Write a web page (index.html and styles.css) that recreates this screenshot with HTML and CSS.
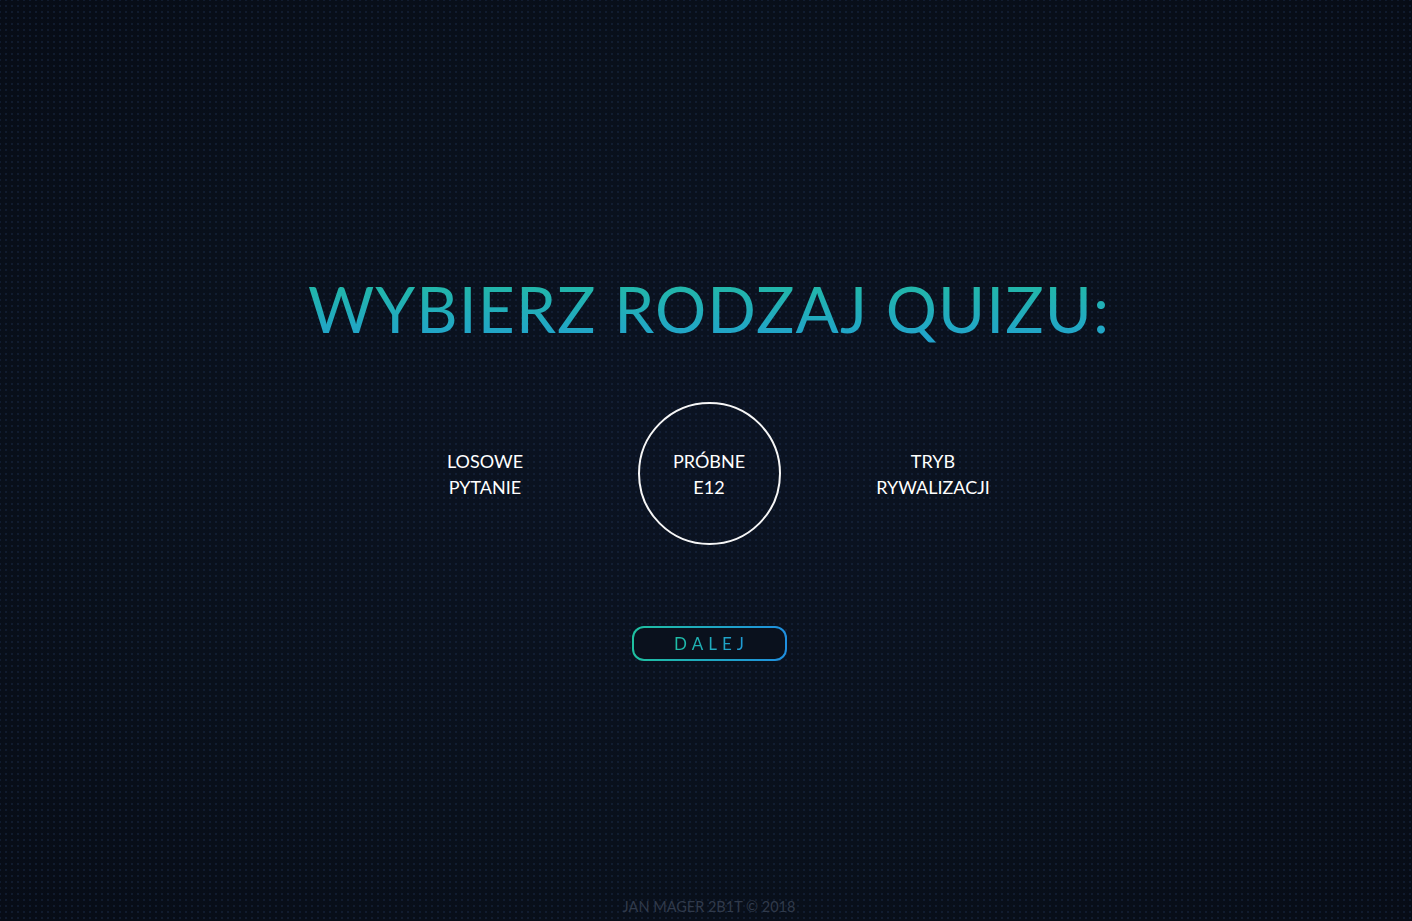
FILE: index.html
```html
<!DOCTYPE html>
<html lang="pl">
<head>
<meta charset="utf-8">
<title>Quiz</title>
<link rel="stylesheet" href="styles.css">
</head>
<body>
<div class="page">
  <main class="main">
    <h1 class="title">WYBIERZ RODZAJ QUIZU:</h1>
    <div class="options">
      <div class="option">LOSOWE<br>PYTANIE</div>
      <div class="option selected">PRÓBNE<br>E12</div>
      <div class="option">TRYB<br>RYWALIZACJI</div>
    </div>
    <button class="next"><span>DALEJ</span></button>
  </main>
  <footer class="footer">JAN MAGER 2B1T © 2018</footer>
</div>
</body>
</html>
```
FILE: styles.css
```css
* { box-sizing: border-box; }
html, body { margin: 0; height: 100%; }
body {
  font-family: Lato, "Open Sans", sans-serif;
  background-color: #0a101c;
  background-image:
    radial-gradient(circle, rgba(30, 48, 80, 0.4) 0.9px, transparent 1.2px),
    radial-gradient(ellipse at center, #0b1322 0%, #09101b 60%, #070c16 100%);
  background-size: 6px 6px, 100% 100%;
  background-position: 3px 3px, 0 0;
  color: #fff;
}
.page {
  height: 921px;
  padding-left: 6px;
  display: flex;
  flex-direction: column;
  align-items: center;
}
.main {
  flex: 1;
  display: flex;
  flex-direction: column;
  align-items: center;
  padding-top: 270px;
}
.title {
  margin: 0;
  font-size: 64px;
  font-weight: 400;
  line-height: 77px;
  letter-spacing: 1.1px;
  background: linear-gradient(180deg, #22b8a6 15%, #21a3cc 90%);
  -webkit-background-clip: text;
  background-clip: text;
  color: transparent;
}
.options {
  margin-top: 55px;
  display: flex;
  align-items: center;
  gap: 81px;
}
.option {
  width: 143px;
  height: 143px;
  border-radius: 50%;
  border: 2px solid transparent;
  display: flex;
  align-items: center;
  justify-content: center;
  text-align: center;
  font-size: 18px;
  line-height: 26px;
  color: #ffffff;
}
.option.selected { border-color: #f6f6f6; }
.next {
  margin-top: 81px;
  width: 155px;
  height: 35px;
  border-radius: 12px;
  border: 2px solid transparent;
  background:
    linear-gradient(#0a111d, #0a111d) padding-box,
    linear-gradient(90deg, #1fc0a0, #1f8fe0) border-box;
  font-family: Lato, sans-serif;
  font-size: 17px;
  letter-spacing: 5px;
  padding: 0 0 0 5px;
  cursor: pointer;
}
.next span {
  background: linear-gradient(90deg, #1fbfa5, #1f98d8);
  -webkit-background-clip: text;
  background-clip: text;
  color: transparent;
}
.footer {
  font-size: 14.5px;
  color: #303a4b;
  padding-bottom: 4px;
  line-height: 20px;
}
```
